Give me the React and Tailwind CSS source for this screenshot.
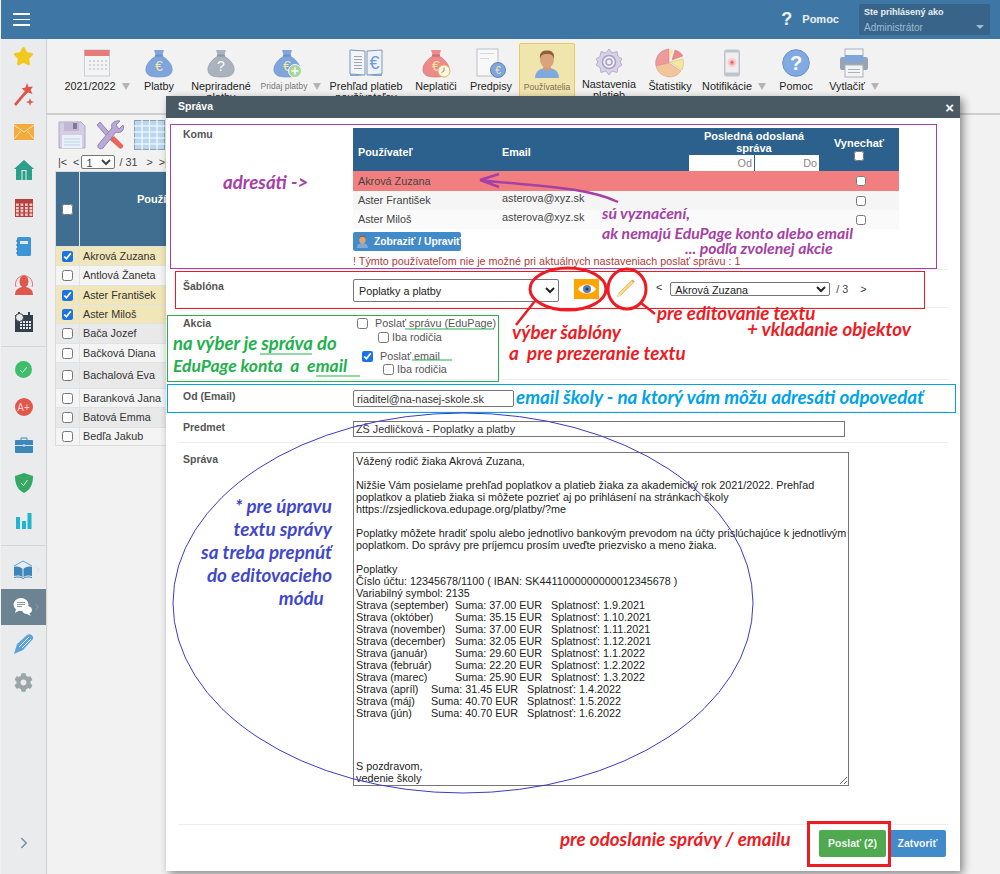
import React from 'react';
import { ChevronRight, Star } from 'lucide-react';
import { FaCog } from 'react-icons/fa';

const Bag = ({ fill = '#7ea6dc', tie = '#6d8fc4', sign = '€', signColor = '#f4e6a0', children }) => (
  <svg width="30" height="30" viewBox="0 0 30 30">
    <path d="M10 2 L20 2 L18 8 L12 8 Z" fill={fill} />
    <path d="M12 8 C5 12 1 18 2 23 C3 28 8 29 15 29 C22 29 27 28 28 23 C29 18 25 12 18 8 Z" fill={fill} stroke={tie} strokeWidth="0.6" />
    <rect x="11" y="6.5" width="8" height="2" fill={tie} />
    {sign && <text x="15" y="23" textAnchor="middle" fontSize="14" fontFamily="Liberation Sans, sans-serif" fill={signColor}>{sign}</text>}
    {children}
  </svg>
);

const CalendarIcon = () => (
  <svg width="26" height="28" viewBox="0 0 26 28">
    <rect x="0.5" y="1" width="25" height="26" fill="#f4f4f4" stroke="#c9cfd4" />
    <rect x="0.5" y="1" width="25" height="6" fill="#e87a7a" />
    {[11, 15, 19].map(y => [6, 10, 14, 18, 22].map(x => <rect key={x + '-' + y} x={x - 1} y={y} width="2" height="2" fill="#cfd6da" />))}
  </svg>
);

const BookEuro = () => (
  <svg width="34" height="30" viewBox="0 0 34 30">
    <path d="M1 2 L16 3 L16 27 L1 26 Z" fill="#f3f4f5" stroke="#7c97b5" />
    <path d="M33 2 L18 3 L18 27 L33 26 Z" fill="#eef2f7" stroke="#7c97b5" />
    <path d="M1 26 L16 28 L18 28 L33 26 L33 28 L1 28 Z" fill="#7ea6dc" />
    {[8, 11, 14, 17, 20].map(y => <rect key={y} x="5" y={y} width="8" height="1" fill="#9aa6b0" />)}
    <text x="25.5" y="21" textAnchor="middle" fontSize="18" fontFamily="Liberation Sans, sans-serif" fill="#6f9bd8">€</text>
  </svg>
);

const DocIcon = () => (
  <svg width="30" height="30" viewBox="0 0 30 30">
    <rect x="1" y="1" width="21" height="27" fill="#f8f8f8" stroke="#b9c0c7" />
    <rect x="4" y="5" width="14" height="1" fill="#d5d9dc" />
    <rect x="4" y="10" width="9" height="1" fill="#d5d9dc" />
    <circle cx="22" cy="22" r="7.5" fill="#7ea6dc" stroke="#5d86bd" />
    <text x="22" y="26" textAnchor="middle" fontSize="10" fontFamily="Liberation Sans, sans-serif" fill="#f4e6a0">€</text>
  </svg>
);

const PersonIcon = ({ size = 28 }) => (
  <svg width={size} height={size} viewBox="0 0 28 28">
    <path d="M2 28 C2 21 7 19 11 18 L17 18 C21 19 26 21 26 28 Z" fill="#7fa9dc" />
    <path d="M10 18 L14 22 L18 18 L17 15 L11 15 Z" fill="#d49a70" />
    <ellipse cx="14" cy="9.5" rx="7" ry="8.5" fill="#d9a47c" />
    <path d="M7 9 C6 2 10 0.5 14 0.5 C18 0.5 22 2 21 9 C20 5 18 4 14 4 C10 4 8 5 7 9 Z" fill="#91603a" />
  </svg>
);

const GearIcon = () => (
  <svg width="28" height="28" viewBox="0 0 28 28">
    <path d="M14 1 L17 5 L22 3.5 L23 8.5 L27 11 L25 14 L27 17 L23 19.5 L22 24.5 L17 23 L14 27 L11 23 L6 24.5 L5 19.5 L1 17 L3 14 L1 11 L5 8.5 L6 3.5 L11 5 Z" fill="#d8d2e6" stroke="#b7afd0" />
    <circle cx="14" cy="14" r="6.5" fill="#f1eff6" stroke="#a9a0c6" strokeWidth="1.5" />
    <circle cx="14" cy="14" r="3" fill="#f1eff6" stroke="#a9a0c6" strokeWidth="1.5" />
  </svg>
);

const PieIcon = () => (
  <svg width="30" height="30" viewBox="0 0 30 30">
    <path d="M14 15 L14 1 A14 14 0 0 0 1 18 Z" fill="#ef9a9a" stroke="#c87a7a" strokeWidth="0.5" />
    <path d="M14 15 L1 18 A14 14 0 0 0 26 23 Z" fill="#f4c49c" stroke="#c99a70" strokeWidth="0.5" />
    <path d="M15 14 L28 11 A14 14 0 0 1 27 22 Z" fill="#f6e79c" stroke="#c9b870" strokeWidth="0.5" />
    <path d="M15 12 L15 1 A13 13 0 0 1 18 1.5 Z" fill="#f6e79c" />
    <path d="M17 12 L20 2 A13 13 0 0 1 28 8 Z" fill="#ef8a8a" stroke="#c87a7a" strokeWidth="0.5" />
  </svg>
);

const PhoneIcon = () => (
  <svg width="18" height="28" viewBox="0 0 18 28">
    <rect x="1" y="0.5" width="16" height="27" rx="2.5" fill="#bcc6d0" />
    <rect x="2.5" y="3.5" width="13" height="20" fill="#f3eeee" />
    <circle cx="9" cy="13.5" r="4.5" fill="#f6d2d2" />
    <circle cx="9" cy="13.5" r="2.5" fill="#ee9f9f" />
    <circle cx="9" cy="13.5" r="1" fill="#e04a4a" />
  </svg>
);

const HelpCircle = () => (
  <svg width="28" height="28" viewBox="0 0 28 28">
    <circle cx="14" cy="14" r="13.3" fill="#82aae2" stroke="#6a92ca" />
    <text x="14" y="21" textAnchor="middle" fontSize="20" fontWeight="700" fontFamily="Liberation Sans, sans-serif" fill="#fff">?</text>
  </svg>
);

const PrinterIcon = () => (
  <svg width="30" height="30" viewBox="0 0 30 30">
    <rect x="6" y="1" width="18" height="10" fill="#f4f4f4" stroke="#a9b2ba" />
    <rect x="1" y="9" width="28" height="13" rx="2" fill="#95a5b5" />
    <rect x="6" y="7" width="18" height="7" fill="#7ea6dc" />
    <rect x="6" y="17" width="18" height="12" fill="#f4f4f4" stroke="#a9b2ba" />
    <rect x="9" y="21" width="12" height="1" fill="#a9b2ba" />
    <rect x="9" y="24" width="12" height="1" fill="#a9b2ba" />
  </svg>
);

const Caret = () => <span className="inline-block w-0 h-0 ml-[6px] border-x-[4px] border-x-transparent border-t-[7px] border-t-[#b5b5b5]" />;

const tools = [
  { w: 'w-[76px]', icon: <CalendarIcon />, label: '2021/2022', caret: true },
  { w: 'w-[48px]', icon: <Bag />, label: 'Platby' },
  { w: 'w-[76px]', icon: <Bag fill="#a9b2bd" tie="#8e97a2" sign="?" signColor="#fff" />, label: 'Nepriradené', second: 'platby' },
  {
    w: 'w-[64px]', shift: 'pr-[9px]', small: true, label: 'Pridaj platby', caret: true,
    icon: <Bag sign="€"><circle cx="23" cy="23" r="6.5" fill="#a8d5a2" stroke="#f4f4f4" /><path d="M23 19.5 V26.5 M19.5 23 H26.5" stroke="#fff" strokeWidth="1.5" /></Bag>,
  },
  { w: 'w-[86px]', icon: <BookEuro />, label: 'Prehľad platieb', second: 'používateľov' },
  {
    w: 'w-[54px]', label: 'Neplatiči',
    icon: <Bag fill="#ee8a8a" tie="#c97070"><circle cx="23" cy="23" r="6" fill="#fdf6dd" stroke="#d8bc6a" /><path d="M23 19.5 V23 L20.5 24.5" stroke="#888" fill="none" /></Bag>,
  },
  { w: 'w-[56px]', icon: <DocIcon />, label: 'Predpisy' },
  { w: 'w-[56px]', icon: <PersonIcon />, label: 'Používatelia', active: true },
  { w: 'w-[68px]', icon: <GearIcon />, label: 'Nastavenia', second: 'platieb' },
  { w: 'w-[54px]', icon: <PieIcon />, label: 'Štatistiky' },
  { w: 'w-[74px]', icon: <PhoneIcon />, label: 'Notifikácie', caret: true, shift: 'pr-[4px]' },
  { w: 'w-[50px]', icon: <HelpCircle />, label: 'Pomoc' },
  { w: 'w-[66px]', icon: <PrinterIcon />, label: 'Vytlačiť', caret: true },
];

const sideTop = [
  <Star size={21} fill="#f2c81e" stroke="#f2c81e" />,
  <svg width="22" height="24" viewBox="0 0 22 24"><path d="M1 22 L12 9 L14 11 L3 24 Z" fill="#e0544a" /><path d="M14 1 L15.5 5 L20 4.5 L17.5 8 L19.5 12 L15 10.5 L12 13 L12 9 L8.5 6.5 L12.5 5.5 Z" fill="#e0544a" /><path d="M17 16 L18 19 L21 20 L18 21 L17 24 L16 21 L13 20 L16 19 Z" fill="#e0544a" /></svg>,
  <svg width="20" height="16" viewBox="0 0 20 16"><rect width="20" height="16" fill="#f2ab3c" /><path d="M0 1 L10 8 L20 1 M0 15 L7 6.5 M20 15 L13 6.5" stroke="#fde3b0" fill="none" /></svg>,
  <svg width="20" height="20" viewBox="0 0 20 20"><path d="M10 0 L20 9 L18 9 L18 20 L2 20 L2 9 L0 9 Z" fill="#2b9f8a" /><rect x="7.5" y="10" width="5" height="10" fill="#e9f4f2" /><rect x="8.5" y="11" width="3" height="9" fill="#2b9f8a" /></svg>,
  <svg width="18" height="18" viewBox="0 0 18 18"><rect width="18" height="18" fill="#b8403c" />{[1, 5.5, 10, 14.5].map(x => [4.5, 8, 11, 14.5].map(y => <rect key={x + '-' + y} x={x} y={y} width="2.8" height="2.4" fill="#eecdcb" />))}</svg>,
  <svg width="16" height="19" viewBox="0 0 16 19"><rect x="1" width="14" height="19" rx="1.5" fill="#3d94d6" /><rect x="4" y="4" width="8" height="3" fill="#dbeaf6" /><path d="M0 4 H2 M0 8 H2 M0 12 H2 M0 16 H2" stroke="#2a6fa6" /></svg>,
  <svg width="20" height="22" viewBox="0 0 20 22"><path d="M1 22 C1 16 5 15 8 14 L12 14 C15 15 19 16 19 22 Z" fill="#e2574c" /><ellipse cx="10" cy="8.5" rx="4.5" ry="6" fill="#e2574c" /><path d="M2 14 A8.5 8.5 0 1 1 18 14" stroke="#e2574c" fill="none" strokeWidth="0.8" /></svg>,
  <svg width="18" height="20" viewBox="0 0 18 20"><rect y="3" width="18" height="17" fill="#333f4a" /><rect x="3" y="0" width="2" height="5" fill="#333f4a" /><rect x="13" y="0" width="2" height="5" fill="#333f4a" />{[9, 12, 15].map(y => [5, 8, 11, 14].map(x => <rect key={x + '-' + y} x={x} y={y} width="2" height="2" fill="#e6e9eb" />))}<circle cx="4.5" cy="5.5" r="4" fill="#e6e9eb" stroke="#333f4a" /></svg>,
];

const sideMid = [
  <svg width="17" height="17" viewBox="0 0 17 17"><circle cx="8.5" cy="8.5" r="8.5" fill="#3ebd6b" /><path d="M5 9 L7.5 11.5 L12 6" stroke="#d6f2e0" fill="none" /></svg>,
  <svg width="18" height="18" viewBox="0 0 18 18"><circle cx="9" cy="9" r="9" fill="#e2574c" /><text x="8.5" y="13" textAnchor="middle" fontSize="10" fontFamily="Liberation Sans, sans-serif" fill="#f8d6d3">A+</text></svg>,
  <svg width="18" height="16" viewBox="0 0 18 16"><rect y="3" width="18" height="13" rx="1" fill="#3d86b8" /><path d="M6 3 V1 H12 V3" stroke="#3d86b8" fill="none" /><rect y="8" width="18" height="1" fill="#d4e5f0" /><rect x="8" y="7.5" width="2" height="2" fill="#d4e5f0" /></svg>,
  <svg width="18" height="20" viewBox="0 0 18 20"><path d="M9 0 L18 3 C18 12 15 17 9 20 C3 17 0 12 0 3 Z" fill="#35a866" /><path d="M6 10 L8.5 12.5 L12.5 7" stroke="#dff2e6" fill="none" /></svg>,
  <svg width="16" height="16" viewBox="0 0 16 16"><rect y="4" width="4" height="12" fill="#1fb6cf" /><rect x="6" y="8" width="4" height="8" fill="#1fb6cf" /><rect x="11.5" y="0" width="4" height="16" fill="#1fb6cf" /></svg>,
];

const students = [
  { name: 'Akrová Zuzana', h: 'h-[19px]', on: true },
  { name: 'Antlová Žaneta', h: 'h-[20px]', bg: 'bg-[#f4f4f4]' },
  { name: 'Aster František', h: 'h-[19px]', on: true },
  { name: 'Aster Miloš', h: 'h-[19px]', on: true },
  { name: 'Bača Jozef', h: 'h-[20px]', bg: 'bg-[#e9e9e9]' },
  { name: 'Bačková Diana', h: 'h-[19px]', bg: 'bg-[#f4f4f4]' },
  { name: 'Bachalová Eva', h: 'h-[26px]', bg: 'bg-[#e9e9e9]' },
  { name: 'Baranková Jana', h: 'h-[19px]', bg: 'bg-[#f4f4f4]' },
  { name: 'Batová Emma', h: 'h-[20px]', bg: 'bg-[#e9e9e9]' },
  { name: 'Bedľa Jakub', h: 'h-[18px]', bg: 'bg-[#f4f4f4]' },
];

const fees = [
  ['Strava (september)', 'Suma: 37.00 EUR', 'Splatnosť: 1.9.2021'],
  ['Strava (október)', 'Suma: 35.15 EUR', 'Splatnosť: 1.10.2021'],
  ['Strava (november)', 'Suma: 37.00 EUR', 'Splatnosť: 1.11.2021'],
  ['Strava (december)', 'Suma: 32.05 EUR', 'Splatnosť: 1.12.2021'],
  ['Strava (január)', 'Suma: 29.60 EUR', 'Splatnosť: 1.1.2022'],
  ['Strava (február)', 'Suma: 22.20 EUR', 'Splatnosť: 1.2.2022'],
  ['Strava (marec)', 'Suma: 25.90 EUR', 'Splatnosť: 1.3.2022'],
];
const feesLate = [
  ['Strava (apríl)', 'Suma: 31.45 EUR', 'Splatnosť: 1.4.2022'],
  ['Strava (máj)', 'Suma: 40.70 EUR', 'Splatnosť: 1.5.2022'],
  ['Strava (jún)', 'Suma: 40.70 EUR', 'Splatnosť: 1.6.2022'],
];

const Label = ({ children, className = '' }) => (
  <div className={`w-[175px] shrink-0 pl-[5px] text-[10.5px] font-bold leading-[12px] text-[#555] ${className}`}>{children}</div>
);

const Note = ({ className, children }) => (
  <div className={`absolute whitespace-pre font-['Lato',sans-serif] font-bold italic ${className}`}>{children}</div>
);

export default function App() {
  return (
    <div className="relative h-[874px] w-[1000px] overflow-hidden bg-[#f2f2f2] pl-px font-['Liberation_Sans',Arial,sans-serif] text-[10.8px] text-[#222]">
      <header className="relative z-10 flex h-[39px] items-center bg-[#3e77a5]">
        <div className="ml-[12px] flex w-[17px] flex-col gap-[4px]">
          <span className="h-[1.5px] bg-white" />
          <span className="h-[1.5px] bg-white" />
          <span className="h-[1.5px] bg-white" />
        </div>
        <span className="ml-auto text-[18px] font-bold text-white/90">?</span>
        <span className="ml-[10px] text-[11px] font-bold text-white/90">Pomoc</span>
        <div className="ml-[20px] mr-[10px] flex h-[31px] w-[131px] flex-col justify-center rounded-[2px] bg-[#376488] px-[5px] text-[10px] leading-[15px]">
          <span className="text-[9px] font-bold text-white/90">Ste prihlásený ako</span>
          <span className="flex items-center justify-between text-[#9dbcd6]">
            Administrátor
            <span className="mr-[1px] h-0 w-0 border-x-[4px] border-t-[4px] border-x-transparent border-t-[#9dbcd6]" />
          </span>
        </div>
      </header>

      <div className="flex h-[835px]">
        <aside className="flex w-[45px] shrink-0 flex-col bg-[#eaebed] shadow-[1px_0_1px_#d5d5d5]">
          <div className="-mt-[2px]">
            {sideTop.map((icon, i) => (
              <div key={i} className="flex h-[38px] items-center justify-center">{icon}</div>
            ))}
          </div>
          <div className="mt-[5px] mb-[3px] h-px bg-[#d4d6d9]" />
          {sideMid.map((icon, i) => (
            <div key={i} className="flex h-[38px] items-center justify-center">{icon}</div>
          ))}
          <div className="mt-[5px] mb-[4px] h-px bg-[#d4d6d9]" />
          <div className="flex h-[39px] items-center justify-center">
            <svg width="20" height="19" viewBox="0 0 20 19"><path d="M1 6 L10 1 L19 6" stroke="#5fa3dc" fill="none" /><path d="M1 7 C4 6 8 7 9.5 9 L9.5 17 C8 15.5 4 15 1 16 Z M19 7 C16 6 12 7 10.5 9 L10.5 17 C12 15.5 16 15 19 16 Z" fill="#3d86b8" /><path d="M1 17.5 C5 16.5 8 17 10 18.5 C12 17 15 16.5 19 17.5" stroke="#3d86b8" fill="none" /></svg>
            <ChevronRight size={10} className="-mr-[8px] text-[#d6d8db]" />
          </div>
          <div className="flex h-[36px] items-center justify-center bg-[#6c8492]">
            <svg width="19" height="18" viewBox="0 0 19 18"><ellipse cx="8" cy="6.5" rx="7.5" ry="6.5" fill="#fff" /><path d="M3 11 L2 15 L7 12 Z" fill="#fff" /><ellipse cx="14" cy="12" rx="5" ry="4" fill="#fff" /><path d="M16 15 L18 18 L12 15 Z" fill="#fff" /><path d="M4 4.5 H12 M4 6.5 H12 M4 8.5 H9" stroke="#8d9ca6" /></svg>
            <ChevronRight size={10} className="-mr-[8px] text-[#8fa2ae]" />
          </div>
          <div className="flex h-[38px] items-center justify-center">
            <svg width="20" height="20" viewBox="0 0 20 20"><path d="M0 20 L3 10 L13 1 C16 -1 20 2 19 5 L9 16 Z" fill="#5fa3dc" /><path d="M5 13 L15 3 M8 14 L17 5" stroke="#eaebed" /></svg>
          </div>
          <div className="flex h-[38px] items-center justify-center">
            <FaCog size={19} color="#9aa5a8" />
          </div>
          <div className="mt-auto flex h-[40px] items-start justify-center">
            <ChevronRight size={18} className="text-[#6f8fa8]" />
          </div>
        </aside>

        <main className="flex-1 pl-[9px]">
          <div className="-ml-[9px] flex h-[76px] border-b-[2px] border-[#cfcfcf] pl-[13px] pt-[4px]">
            {tools.map(t => (
              <div key={t.label} className={`flex h-[54px] shrink-0 flex-col items-center overflow-visible pt-[5px] ${t.w} ${t.active ? 'rounded-[2px] border border-[#e8c860] bg-[#f1e5ae]' : ''}`}>
                <div className={`flex h-[30px] items-center justify-center ${t.shift || ''}`}>{t.icon}</div>
                <div className={`mt-[2px] flex h-[12px] items-center whitespace-nowrap leading-[12px] ${t.small ? 'text-[8.5px] text-[#777]' : t.active ? 'text-[8.5px] text-[#7d6d50]' : 'text-[10.8px] text-[#222]'}`}>
                  {t.label}{t.caret && <Caret />}
                </div>
                {t.second && <div className="text-[10.8px] leading-[10px]">{t.second}</div>}
              </div>
            ))}
          </div>

          <div className="mt-[5px] flex h-[30px] items-center gap-[9px] pl-[3px]">
            <svg width="28" height="28" viewBox="0 0 28 28"><path d="M1 1 H23 L27 5 V27 H1 Z" fill="#d5cde4" stroke="#b2a8c9" /><rect x="6" y="1" width="15" height="9" fill="#c2b8d6" /><rect x="15" y="2" width="4" height="6" fill="#7f7a91" /><rect x="4" y="14" width="20" height="13" fill="#eaf2f9" /><path d="M6 18 H22 M6 21 H22 M6 24 H22" stroke="#bcd3e6" /></svg>
            <svg width="30" height="30" viewBox="0 0 30 30"><path d="M2 5 L5 2 L18 17 L15 20 Z" fill="#b8a9d6" stroke="#9387b0" /><path d="M15 20 L19 16 L28 25 C29 27 26 30 24 28 Z" fill="#e8645a" /><path d="M3 25 L17 8 C15 3 20 0 25 1 L21 5 L24 9 L28 5 C30 10 26 14 21 12 L8 28 C5 30 2 28 3 25 Z" fill="#b8a9d6" stroke="#9387b0" /></svg>
            <svg width="31" height="30" viewBox="0 0 31 30"><rect x="0.5" y="0.5" width="30" height="29" fill="#b9d7ef" stroke="#8da0b2" /><path d="M8 0 V30 M15.5 0 V30 M23 0 V30 M0 6 H31 M0 12 H31 M0 18 H31 M0 24 H31" stroke="#fff" /></svg>
          </div>
          <div className="mt-[4px] flex h-[16px] items-center pl-[3px] text-[10.8px] text-[#444]">
            <span className="whitespace-pre">|&lt;  &lt;</span>
            <select className="ml-[2px] mr-[4px] h-[14px] w-[34px] rounded-[2px] border border-[#767676] bg-white text-[11px] leading-[12px]"><option>1</option></select>
            <span>/ 31</span>
            <span className="ml-[9px] whitespace-pre">&gt;  &gt;|</span>
          </div>

          <div className="mt-[1px] w-[200px] border border-[#dcdcdc]">
            <div className="flex h-[74px] bg-[#3f6e90]">
              <div className="flex w-[24px] items-center justify-center border-r border-[#dfe6ea]">
                <input type="checkbox" className="h-[11px] w-[11px]" />
              </div>
              <div className="pl-[57px] pt-[19px] text-[11px] font-bold text-white">Používateľ</div>
            </div>
            {students.map(s => (
              <div key={s.name} className={`flex border-t border-[#dfe3e6] ${s.h} ${s.on ? 'bg-[#f1e6b8]' : s.bg}`}>
                <div className="flex w-[24px] items-center justify-center border-r border-[#dfe3e6]">
                  <input type="checkbox" defaultChecked={s.on} className="h-[11px] w-[11px] accent-[#1a73e8]" />
                </div>
                <div className="flex items-center pl-[3px] text-[10.8px] text-[#333]">{s.name}</div>
              </div>
            ))}
          </div>
        </main>
      </div>

      {/* modal */}
      <section className="absolute left-[166px] top-[96px] flex h-[775px] w-[794px] flex-col rounded-t-[2px] bg-white shadow-[3px_3px_8px_rgba(0,0,0,0.45)]">
        <div className="flex h-[22px] shrink-0 items-center justify-between bg-[#495a65] pl-[12px] pr-[6px] text-[10.5px] font-bold text-white">
          <span>Správa</span>
          <span className="text-[15px] leading-[15px]">×</span>
        </div>

        <div className="mx-[12px] flex flex-1 flex-col">
          <div className="flex h-[152px] border-b border-[#eee] pt-[10px]">
            <Label>Komu</Label>
            <div className="w-[546px]">
              <div className="flex h-[43px] bg-[#2b618c] font-bold text-white">
                <div className="w-[149px] pl-[5px] pt-[16px] text-[10.8px]">Používateľ</div>
                <div className="w-[187px] pt-[16px] text-[10.8px]">Email</div>
                <div className="w-[130px] text-center">
                  <div className="pt-[2px] text-[11px] leading-[12px]">Posledná odoslaná správa</div>
                  <div className="flex gap-px pt-[1px]">
                    <input readOnly placeholder="Od" className="h-[16px] w-[65px] bg-white pr-[2px] text-right text-[10.8px] font-normal placeholder:text-[#888]" />
                    <input readOnly placeholder="Do" className="h-[16px] w-[64px] bg-white pr-[2px] text-right text-[10.8px] font-normal placeholder:text-[#888]" />
                  </div>
                </div>
                <div className="flex flex-1 flex-col items-center pt-[9px] text-[11px] leading-[12px]">
                  Vynechať
                  <input type="checkbox" className="mt-[2px] h-[10px] w-[10px]" />
                </div>
              </div>
              {[
                ['Akrová Zuzana', '', 'h-[20px] bg-[#f17f7f]'],
                ['Aster František', 'asterova@xyz.sk', 'h-[19px] bg-[#f5f5f5]'],
                ['Aster Miloš', 'asterova@xyz.sk', 'h-[19px] bg-[#fafafa]'],
              ].map(([name, email, cls]) => (
                <div key={name} className={`flex items-center text-[10.8px] text-[#444] ${cls}`}>
                  <div className="w-[149px] pl-[5px]">{name}</div>
                  <div className="w-[317px] -translate-y-[2px]">{email}</div>
                  <div className="flex flex-1 justify-center pl-[3px]"><input type="checkbox" className="h-[10px] w-[10px]" /></div>
                </div>
              ))}
              <button className="mt-[3px] flex h-[19px] w-[108px] items-center gap-[5px] whitespace-nowrap rounded-[2px] bg-[#428bca] pl-[3px] text-[10.3px] font-bold text-white">
                <PersonIcon size={15} />
                Zobraziť / Upraviť
              </button>
              <div className="mt-[4px] whitespace-nowrap text-[10.8px] leading-[12px] text-[#b03a3a]">! Týmto používateľom nie je možné pri aktuálnych nastaveniach poslať správu : 1</div>
            </div>
          </div>

          <div className="flex h-[38px] items-start border-b border-[#eee] pt-[9px]">
            <Label className="pt-[1px]">Šablóna</Label>
            <select className="h-[23px] w-[206px] rounded-[2px] border border-[#767676] bg-white pl-[1px] text-[10.8px]"><option>Poplatky a platby</option></select>
            <div className="ml-[15px] flex h-[20px] w-[25px] items-center justify-center bg-[#ffa500]">
              <svg width="18" height="12" viewBox="0 0 18 12"><path d="M0 6 C4 0 14 0 18 6 C14 12 4 12 0 6 Z" fill="#fff" /><circle cx="9" cy="6" r="4" fill="#5b7fb5" /><circle cx="9" cy="6" r="1.5" fill="#2a3b55" /></svg>
            </div>
            <svg className="ml-[18px]" width="18" height="18" viewBox="0 0 18 18"><path d="M0.5 17.5 L1.8 14 L14.5 1.5 L16.5 3.5 L4 16.2 Z" fill="#f5dc7c" stroke="#cfa84e" strokeWidth="0.6" /><path d="M0.5 17.5 L1.8 14 L4 16.2 Z" fill="#f3e6c4" /><path d="M14.5 1.5 L15.5 0.5 L17.5 2.5 L16.5 3.5 Z" fill="#e8907c" /></svg>
            <span className="ml-[21px] text-[10.8px] text-[#333]">&lt;</span>
            <select className="ml-[8px] mt-[3px] h-[14px] w-[160px] rounded-[2px] border border-[#767676] bg-white text-[10.8px] leading-[12px]"><option>Akrová Zuzana</option></select>
            <span className="ml-[6px] mt-[2px] text-[10.8px] text-[#444]">/ 3</span>
            <span className="ml-[12px] mt-[2px] text-[10.8px] text-[#333]">&gt;</span>
          </div>

          <div className="flex h-[72px] border-b border-[#eee] pt-[9px]">
            <Label>Akcia</Label>
            <div className="text-[10.8px] leading-[13px] text-[#555]">
              <label className="ml-[4px] flex items-center gap-[7px]"><input type="checkbox" className="h-[11px] w-[11px]" />Poslať správu (EduPage)</label>
              <label className="ml-[25px] mt-[1px] flex items-center gap-[3px]"><input type="checkbox" className="h-[11px] w-[11px]" />Iba rodičia</label>
              <label className="ml-[9px] mt-[6px] flex items-center gap-[7px]"><input type="checkbox" defaultChecked className="h-[11px] w-[11px] accent-[#1a73e8]" />Poslať email</label>
              <label className="ml-[30px] flex items-center gap-[3px]"><input type="checkbox" className="h-[11px] w-[11px]" />Iba rodičia</label>
            </div>
          </div>

          <div className="flex h-[32px] border-b border-[#eee] pt-[10px]">
            <Label>Od (Email)</Label>
            <input readOnly value="riaditel@na-nasej-skole.sk" className="h-[17px] w-[161px] rounded-[2px] border border-[#767676] pl-[3px] text-[10.8px] text-[#333]" />
          </div>

          <div className="flex h-[31px] border-b border-[#eee] pt-[9px]">
            <Label>Predmet</Label>
            <input readOnly value="ZŠ Jedličková - Poplatky a platby" className="h-[16px] w-[492px] border border-[#767676] pl-[2px] text-[10.8px] text-[#333]" />
          </div>

          <div className="flex h-[382px] border-b border-[#eee] pt-[9px]">
            <Label className="pt-[1px]">Správa</Label>
            <div className="h-[334px] w-[496px] resize overflow-hidden whitespace-nowrap border border-[#767676] pl-[2px] pt-[2px] text-[10.8px] leading-[12px] text-[#222]">
              <p>Vážený rodič žiaka Akrová Zuzana,</p>
              <p className="mt-[12px]">Nižšie Vám posielame prehľad poplatkov a platieb žiaka za akademický rok 2021/2022. Prehľad</p>
              <p>poplatkov a platieb žiaka si môžete pozrieť aj po prihlásení na stránkach školy</p>
              <p>https://zsjedlickova.edupage.org/platby/?me</p>
              <p className="mt-[12px]">Poplatky môžete hradiť spolu alebo jednotlivo bankovým prevodom na účty prislúchajúce k jednotlivým</p>
              <p>poplatkom. Do správy pre príjemcu prosím uveďte priezvisko a meno žiaka.</p>
              <p className="mt-[12px]">Poplatky</p>
              <p>Číslo účtu: 12345678/1100 ( IBAN: SK4411000000000012345678 )</p>
              <p>Variabilný symbol: 2135</p>
              {fees.map(f => (
                <div key={f[0]} className="grid grid-cols-[99px_96px_1fr]">{f.map(c => <span key={c}>{c}</span>)}</div>
              ))}
              {feesLate.map(f => (
                <div key={f[0]} className="grid grid-cols-[75px_96px_1fr]">{f.map(c => <span key={c}>{c}</span>)}</div>
              ))}
              <p className="mt-[41px]">S pozdravom,</p>
              <p>vedenie školy</p>
            </div>
          </div>

          <div className="flex flex-1 items-start justify-end gap-[3px] pr-[2px] pt-[5px]">
            <button className="h-[27px] w-[67px] rounded-[2px] bg-[#4fa950] text-[10.5px] font-bold text-white/95">Poslať (2)</button>
            <button className="h-[27px] w-[57px] rounded-[2px] bg-[#428bca] text-[10.5px] font-bold text-white/95">Zatvoriť</button>
          </div>
        </div>
      </section>

      {/* annotations drawn over the screenshot */}
      <div className="pointer-events-none absolute left-[170px] top-[124px] h-[145px] w-[767px] border border-[#a640a6]" />
      <div className="pointer-events-none absolute left-[175px] top-[271px] h-[38px] w-[750px] border border-[#ed1c24]" />
      <div className="pointer-events-none absolute left-[167px] top-[315px] h-[67px] w-[332px] border border-[#22b14c]" />
      <div className="pointer-events-none absolute left-[167px] top-[384px] h-[29px] w-[789px] border border-[#00a2e8]" />
      <div className="pointer-events-none absolute left-[807px] top-[821px] h-[46px] w-[84px] border-[3px] border-[#ed1c24]" />

      <svg className="pointer-events-none absolute left-0 top-0" width="1000" height="874" viewBox="0 0 1000 874">
        <ellipse cx="463" cy="603" rx="290" ry="190" fill="none" stroke="#3b3bc8" />
        <ellipse cx="568" cy="289" rx="38" ry="21" fill="none" stroke="#ed1c24" strokeWidth="3" />
        <ellipse cx="627" cy="289" rx="19" ry="20" fill="none" stroke="#ed1c24" strokeWidth="3" />
        <path d="M535 301 L516 325 M641 303 L655 314" stroke="#ed1c24" strokeWidth="2.5" fill="none" />
        <path d="M480 180 L499 174 M480 180 L499 187 M480 180 C530 186 585 186 618 202" stroke="#a640a6" strokeWidth="2.5" fill="none" />
        <path d="M405 329 H494 M260 354 H312 M316 376 H360 M412 360 H452" stroke="#22b14c" fill="none" />
      </svg>

      <Note className="left-[223px] top-[171px] text-[18.7px] leading-[22px] text-[#a640a6]">adresáti -&gt;</Note>
      <Note className="left-[602px] top-[205px] text-[15.8px] leading-[15px] text-[#a640a6]">sú vyznačení,</Note>
      <Note className="left-[602px] top-[225px] text-[15.8px] leading-[15px] text-[#a640a6]">ak nemajú EduPage konto alebo email</Note>
      <Note className="left-[685px] top-[240px] text-[15.8px] leading-[15px] text-[#a640a6]">... podľa zvolenej akcie</Note>
      <Note className="left-[512px] top-[324px] text-[18.8px] leading-[16px] text-[#ed1c24]">výber šablóny</Note>
      <Note className="left-[509px] top-[345px] text-[18.8px] leading-[16px] text-[#ed1c24]">a  pre prezeranie textu</Note>
      <Note className="left-[657px] top-[305px] text-[18.8px] leading-[16px] text-[#ed1c24]">pre editovanie textu</Note>
      <Note className="left-[747px] top-[321px] text-[18.8px] leading-[16px] text-[#ed1c24]">+ vkladanie objektov</Note>
      <Note className="left-[173px] top-[333px] text-[18.5px] leading-[21px] text-[#22b14c]">na výber je správa do</Note>
      <Note className="left-[173px] top-[355px] text-[17.5px] leading-[21px] text-[#22b14c]">EduPage konta  a  email</Note>
      <Note className="left-[516px] top-[386px] text-[18.8px] leading-[21px] text-[#00a2e8]">email školy - na ktorý vám môžu adresáti odpovedať</Note>
      <Note className="left-[180px] top-[494px] w-[152px] text-right text-[18.8px] leading-[23px] text-[#3f48cc]">{'* pre úpravu\ntextu správy\nsa treba prepnúť\ndo editovacieho\nmódu  '}</Note>
      <Note className="left-[560px] top-[829px] text-[18.8px] leading-[20px] text-[#ed1c24]">pre odoslanie správy / emailu</Note>
    </div>
  );
}
